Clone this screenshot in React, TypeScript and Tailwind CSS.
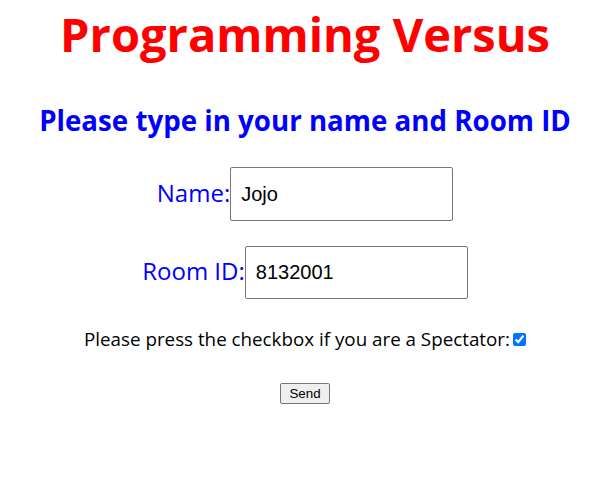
export default function App() {
  return (
    <main className="flex flex-col items-center bg-white min-h-[490px] pr-[5px] font-['Open_Sans',sans-serif]">
      <h1 className="mt-[4px] text-[47px] leading-[60px] font-bold text-[#ff0000]">Programming Versus</h1>

      <h2 className="mt-[38px] text-[27.7px] leading-[36px] font-bold text-[#0000ff]">
        Please type in your name and Room ID
      </h2>

      {/* Form */}
      <div className="mt-[29px] flex items-center">
        <label className="pb-[3px] text-[24px] text-[#0000ff]">Name:</label>
        <input
          defaultValue="Jojo"
          className="w-[223px] h-[54px] border border-[#767676] rounded-[2px] px-[10px] text-[20px] text-black font-['Liberation_Sans',sans-serif]"
        />
      </div>

      <div className="mt-[25px] flex items-center">
        <label className="pb-[3px] text-[24px] text-[#0000ff]">Room ID:</label>
        <input
          defaultValue="8132001"
          className="w-[223px] h-[53px] border border-[#767676] rounded-[2px] px-[10px] text-[20px] text-black font-['Liberation_Sans',sans-serif]"
        />
      </div>

      <div className="mt-[26px] flex items-center text-[18.8px] text-black">
        <span>Please press the checkbox if you are a Spectator:</span>
        <input type="checkbox" defaultChecked className="ml-[3px] w-[13px] h-[13px] accent-[#0075ff]" />
      </div>

      <button className="mt-[30px] h-[21px] px-[8px] border border-[#767676] rounded-[2px] bg-[#efefef] text-[13.33px] leading-none text-black font-['Liberation_Sans',sans-serif]">
        Send
      </button>
    </main>
  );
}
